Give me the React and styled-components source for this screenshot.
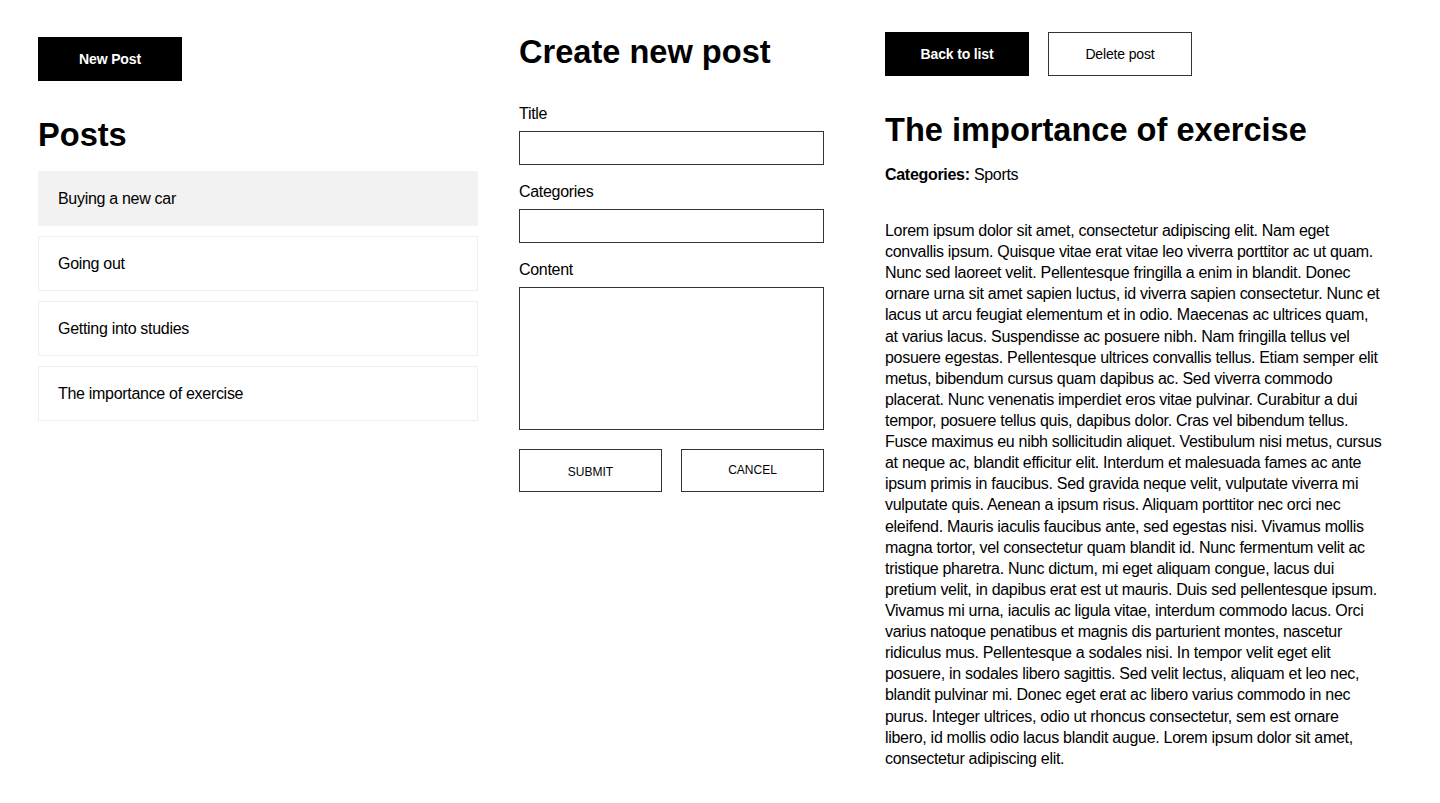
import React from 'react';
import styled, { createGlobalStyle } from 'styled-components';

const posts = [
  'Buying a new car',
  'Going out',
  'Getting into studies',
  'The importance of exercise',
];

const lorem = 'Lorem ipsum dolor sit amet, consectetur adipiscing elit. Nam eget convallis ipsum. Quisque vitae erat vitae leo viverra porttitor ac ut quam. Nunc sed laoreet velit. Pellentesque fringilla a enim in blandit. Donec ornare urna sit amet sapien luctus, id viverra sapien consectetur. Nunc et lacus ut arcu feugiat elementum et in odio. Maecenas ac ultrices quam, at varius lacus. Suspendisse ac posuere nibh. Nam fringilla tellus vel posuere egestas. Pellentesque ultrices convallis tellus. Etiam semper elit metus, bibendum cursus quam dapibus ac. Sed viverra commodo placerat. Nunc venenatis imperdiet eros vitae pulvinar. Curabitur a dui tempor, posuere tellus quis, dapibus dolor. Cras vel bibendum tellus. Fusce maximus eu nibh sollicitudin aliquet. Vestibulum nisi metus, cursus at neque ac, blandit efficitur elit. Interdum et malesuada fames ac ante ipsum primis in faucibus. Sed gravida neque velit, vulputate viverra mi vulputate quis. Aenean a ipsum risus. Aliquam porttitor nec orci nec eleifend. Mauris iaculis faucibus ante, sed egestas nisi. Vivamus mollis magna tortor, vel consectetur quam blandit id. Nunc fermentum velit ac tristique pharetra. Nunc dictum, mi eget aliquam congue, lacus dui pretium velit, in dapibus erat est ut mauris. Duis sed pellentesque ipsum. Vivamus mi urna, iaculis ac ligula vitae, interdum commodo lacus. Orci varius natoque penatibus et magnis dis parturient montes, nascetur ridiculus mus. Pellentesque a sodales nisi. In tempor velit eget elit posuere, in sodales libero sagittis. Sed velit lectus, aliquam et leo nec, blandit pulvinar mi. Donec eget erat ac libero varius commodo in nec purus. Integer ultrices, odio ut rhoncus consectetur, sem est ornare libero, id mollis odio lacus blandit augue. Lorem ipsum dolor sit amet, consectetur adipiscing elit.';

const App = () => (
  <>
    <GlobalStyle />
    <Page>
      <LeftColumn>
        <Button dark>New Post</Button>
        <PostsTitle>Posts</PostsTitle>
        <PostList>
          {posts.map((title, i) => (
            <PostItem key={title} active={i === 0}>{title}</PostItem>
          ))}
        </PostList>
      </LeftColumn>

      <MiddleColumn>
        <Heading>Create new post</Heading>
        <Form>
          <Field>
            <Label>Title</Label>
            <Input type="text" />
          </Field>
          <Field>
            <Label>Categories</Label>
            <Input type="text" />
          </Field>
          <Field>
            <Label>Content</Label>
            <TextArea />
          </Field>
          <FormActions>
            <SmallButton type="submit" nudge>Submit</SmallButton>
            <SmallButton type="button">Cancel</SmallButton>
          </FormActions>
        </Form>
      </MiddleColumn>

      <RightColumn>
        <Toolbar>
          <Button dark>Back to list</Button>
          <Button>Delete post</Button>
        </Toolbar>
        <PostTitle>The importance of exercise</PostTitle>
        <Meta><strong>Categories:</strong> Sports</Meta>
        <Body>{lorem}</Body>
      </RightColumn>
    </Page>
  </>
);

const GlobalStyle = createGlobalStyle`
  body {
    margin: 0;
    background: #fff;
    color: #000;
    font-family: "Liberation Sans", Arial, Helvetica, sans-serif;
    font-size: 16px;
  }
  * { box-sizing: border-box; }
`;

const Page = styled.div`
  display: flex;
  align-items: flex-start;
  padding: 32px 0 0 38px;
  min-height: 803px;
`;

const LeftColumn = styled.div`
  width: 440px;
  padding-top: 5px;
  margin-right: 41px;
`;

const MiddleColumn = styled.div`
  width: 305px;
  padding-top: 1px;
  margin-right: 61px;
`;

const RightColumn = styled.div`
  width: 499px;
`;

const Button = styled.button`
  display: flex;
  align-items: center;
  justify-content: center;
  width: 144px;
  height: 44px;
  padding: 0;
  font-family: inherit;
  font-size: 14px;
  letter-spacing: -0.15px;
  font-weight: ${p => (p.dark ? 700 : 400)};
  color: ${p => (p.dark ? '#fff' : '#000')};
  background: ${p => (p.dark ? '#000' : '#fff')};
  border: 1px solid ${p => (p.dark ? '#000' : '#333')};
  cursor: pointer;
`;

const Heading = styled.h1`
  margin: 0;
  font-size: 32.6px;
  font-weight: 700;
  line-height: 37px;
`;

const PostsTitle = styled(Heading)`
  margin: 35px 0 18px;
`;

const PostList = styled.ul`
  list-style: none;
  margin: 0;
  padding: 0;
  display: flex;
  flex-direction: column;
  gap: 10px;
`;

const PostItem = styled.li`
  display: flex;
  align-items: center;
  height: 55px;
  padding-left: 19px;
  font-size: 16px;
  letter-spacing: -0.3px;
  background: ${p => (p.active ? '#f2f2f2' : '#fff')};
  border: 1px solid ${p => (p.active ? '#f2f2f2' : '#eeeeee')};
`;

const Form = styled.form`
  margin-top: 35px;
`;

const Field = styled.div`
  display: flex;
  flex-direction: column;
  margin-bottom: 18px;
`;

const Label = styled.label`
  font-size: 16px;
  line-height: 18px;
  letter-spacing: -0.3px;
  margin-bottom: 8px;
`;

const Input = styled.input`
  height: 34px;
  border: 1px solid #333;
  border-radius: 0;
  padding: 0 8px;
  font-family: inherit;
  font-size: 16px;
  outline: none;
`;

const TextArea = styled.textarea`
  height: 143px;
  border: 1px solid #333;
  border-radius: 0;
  padding: 8px;
  font-family: inherit;
  font-size: 16px;
  resize: none;
  outline: none;
`;

const FormActions = styled.div`
  display: flex;
  justify-content: space-between;
  margin-top: 19px;
`;

const SmallButton = styled.button`
  width: 143px;
  height: 43px;
  padding: ${p => (p.nudge ? '2px 0 0' : '0 0 2px')};
  background: #fff;
  border: 1px solid #333;
  font-family: inherit;
  font-size: 12px;
  text-transform: uppercase;
  color: #000;
  cursor: pointer;
`;

const Toolbar = styled.div`
  display: flex;
  gap: 19px;
`;

const PostTitle = styled(Heading)`
  margin: 35px 0 18px;
`;

const Meta = styled.p`
  margin: 0;
  font-size: 16px;
  line-height: 18px;
  letter-spacing: -0.3px;
`;

const Body = styled.p`
  margin: 36px 0 0;
  font-size: 16px;
  line-height: 1.32;
  letter-spacing: -0.3px;
`;

export default App;
